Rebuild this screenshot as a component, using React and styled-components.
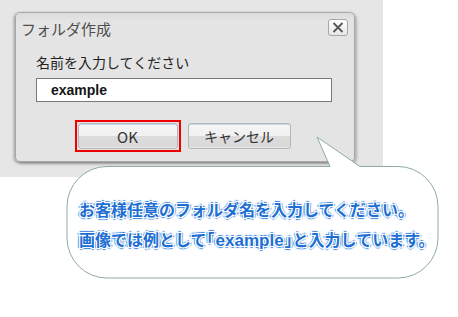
import React from "react";
import styled, { createGlobalStyle } from "styled-components";

const Global = createGlobalStyle`
  html, body { margin: 0; padding: 0; background: #ffffff; }
  body { font-family: "Noto Sans CJK JP", "Noto Sans", sans-serif; }
`;

const Page = styled.div`
  position: relative;
  width: 458px;
  height: 317px;
  overflow: hidden;
`;

const Backdrop = styled.div`
  width: 383px;
  height: 177px;
  background: #e6e6e6;
  padding: 12px 0 0 15px;
  box-sizing: border-box;
`;

const Dialog = styled.div`
  width: 340px;
  height: 150px;
  box-sizing: border-box;
  background: linear-gradient(#dcdcdc 0px, #e4e4e4 8px, #e4e4e4 100%);
  border: 1px solid #a9a9a9;
  border-radius: 5px;
  box-shadow: -1px 1px 3px rgba(0, 0, 0, 0.35), 2px 2px 3px rgba(0, 0, 0, 0.2);
  display: flex;
  flex-direction: column;
`;

const TitleBar = styled.div`
  height: 32px;
  display: flex;
  justify-content: space-between;
  align-items: flex-start;
  padding: 6px 6px 0 5px;
  box-sizing: border-box;
`;

const Title = styled.div`
  font-size: 15px;
  line-height: 20px;
  color: #4d4d4d;
`;

const CloseButton = styled.div`
  width: 20px;
  height: 17px;
  box-sizing: border-box;
  border: 1px solid #a8a8a8;
  border-radius: 3px;
  background: linear-gradient(#ffffff, #e6e6e6);
  display: flex;
  align-items: center;
  justify-content: center;
`;

const Body = styled.div`
  display: flex;
  flex-direction: column;
  padding: 0 22px 0 20px;
`;

const Label = styled.div`
  margin-top: 7px;
  font-size: 14px;
  line-height: 20px;
  color: #222;
`;

const Input = styled.div`
  margin-top: 6px;
  height: 24px;
  box-sizing: border-box;
  background: #fff;
  border: 1px solid #7a7a7a;
  padding-left: 14px;
  font-family: "Liberation Sans", Arial, sans-serif;
  font-weight: bold;
  font-size: 14px;
  line-height: 22px;
  color: #151515;
`;

const ButtonRow = styled.div`
  margin-top: 21px;
  display: flex;
  justify-content: center;
  gap: 10px;
`;

const Highlight = styled.div`
  margin: -3px;
  padding: 1px;
  border: 2px solid #ee0000;
  display: flex;
`;

const Button = styled.div`
  width: ${(p) => p.$w}px;
  height: 26px;
  box-sizing: border-box;
  border: 1px solid #b5b5b5;
  border-radius: 3px;
  background: linear-gradient(#f5f5f5 0%, #f1f1f1 50%, #dcdcdc 51%, #d9d9d9 100%);
  box-shadow: inset 0 1px 0 #c5daf0, inset 0 -1px 0 #e8e8e8;
  display: flex;
  align-items: center;
  justify-content: center;
  font-size: ${(p) => p.$fs}px;
  color: #333;
`;

const BubbleSvg = styled.svg`
  position: absolute;
  left: 60px;
  top: 130px;
`;

const BubbleText = styled.div`
  position: absolute;
  left: 79px;
  top: 194px;
  font-size: 16px;
  font-weight: bold;
  line-height: 30px;
  color: #1d6fd4;
  text-shadow:
    1px 0 0 #fff, -1px 0 0 #fff, 0 1px 0 #fff, 0 -1px 0 #fff,
    1px 1px 0 #fff, -1px -1px 0 #fff, 1px -1px 0 #fff, -1px 1px 0 #fff,
    2px 0 1px #3a82da, -2px 0 1px #3a82da, 0 2px 1px #3a82da, 0 -2px 1px #3a82da;
`;

const Latin = styled.span`
  font-family: "Liberation Sans", Arial, sans-serif;
  font-size: 17px;
  padding: 0 1px;
`;

const Bracket = styled.span`
  font-feature-settings: "halt";
`;

export default function App() {
  return (
    <Page>
      <Global />
      <Backdrop>
        <Dialog>
          <TitleBar>
            <Title>フォルダ作成</Title>
            <CloseButton>
              <svg width="12" height="11" viewBox="0 0 12 11">
                <path d="M1.5 1 L10.5 10 M10.5 1 L1.5 10" stroke="#555" strokeWidth="1.8" fill="none" />
              </svg>
            </CloseButton>
          </TitleBar>
          <Body>
            <Label>名前を入力してください</Label>
            <Input>example</Input>
            <ButtonRow>
              <Highlight>
                <Button $w={100} $fs={15}>OK</Button>
              </Highlight>
              <Button $w={103} $fs={14}>キャンセル</Button>
            </ButtonRow>
          </Body>
        </Dialog>
      </Backdrop>
      <BubbleSvg width="390" height="155" viewBox="0 0 390 155">
        <path
          d="M 47 36.5 L 270 36.5 L 257 7 L 300 36.5 L 338 36.5 A 40 40 0 0 1 378 76.5 L 378 108 A 40 40 0 0 1 338 148 L 47 148 A 40 40 0 0 1 7 108 L 7 76.5 A 40 40 0 0 1 47 36.5 Z"
          fill="#ffffff"
          stroke="#8fa9a8"
          strokeWidth="1"
        />
      </BubbleSvg>
      <BubbleText>
        お客様任意のフォルダ名を入力してください。
        <br />
        画像では例として<Bracket>「</Bracket><Latin>example</Latin><Bracket>」</Bracket>と入力しています。
      </BubbleText>
    </Page>
  );
}
